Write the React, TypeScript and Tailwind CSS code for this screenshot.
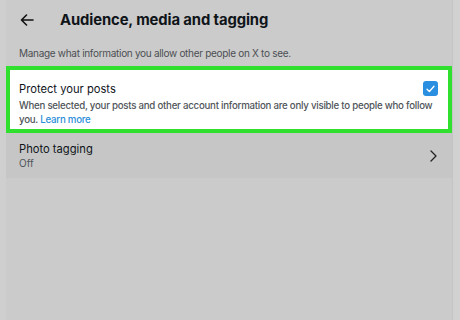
import React from "react";

export default function App() {
  return (
    <div
      className="w-[460px] h-[320px] bg-[#cfcfcf] flex overflow-hidden"
      style={{ fontFamily: "Inter, 'Noto Sans', sans-serif" }}
    >
      <div className="w-[6px] shrink-0 bg-[#cfcfcf]" />
      <div className="w-[446px] shrink-0 bg-[#cbcbcb] flex flex-col">
        <div className="h-[40px] flex items-center">
          <svg width="14" height="12" viewBox="0 0 14 12" className="ml-[14px]">
            <path d="M13 6H1.5M6.5 1L1.5 6L6.5 11" fill="none" stroke="#111" strokeWidth="1.6" strokeLinecap="round" strokeLinejoin="round" />
          </svg>
          <div className="ml-[26px] text-[14.8px] font-bold text-[#0f1419] tracking-[-0.1px]">
            Audience, media and tagging
          </div>
        </div>
        <div className="pl-[13px] mt-[6px] text-[10px] text-[#4b4f53] leading-[14px] tracking-[-0.3px]">
          Manage what information you allow other people on X to see.
        </div>
        <div className="mt-[6px] h-[67px] border-[4px] border-[#2fe02f] bg-white pl-[9px] pr-[4px] pt-[12px] relative">
          <div className="text-[11.2px] text-[#0f1419] leading-[15px]">Protect your posts</div>
          <div className="mt-[2px] text-[9.7px] font-medium text-[#50555a] leading-[13.5px] tracking-[-0.25px]">
            <div className="whitespace-nowrap">
              When selected, your posts and other account information are only visible to people who follow
            </div>
            <div>
              you. <span className="text-[#2b8fd8]">Learn more</span>
            </div>
          </div>
          <div className="absolute right-[10px] top-[11px] w-[15px] h-[15px] rounded-[3px] bg-[#2a8fe0] flex items-center justify-center">
            <svg width="9" height="8" viewBox="0 0 9 8">
              <path d="M1 4.2L3.4 6.5L8 1.2" fill="none" stroke="#fff" strokeWidth="1.3" strokeLinecap="round" strokeLinejoin="round" />
            </svg>
          </div>
        </div>
        <div className="h-[45px] bg-[#c6c6c6] flex items-center pl-[13px] pr-[15px]">
          <div className="flex-1 flex flex-col">
            <div className="text-[11.2px] text-[#0f1419] leading-[15px]">Photo tagging</div>
            <div className="text-[10px] text-[#50555a] leading-[13px]">Off</div>
          </div>
          <svg width="7" height="12" viewBox="0 0 7 12">
            <path d="M1 1L6 6L1 11" fill="none" stroke="#222" strokeWidth="1.3" strokeLinecap="round" strokeLinejoin="round" />
          </svg>
        </div>
        <div className="flex-1 bg-[#cbcbcb]" />
      </div>
      <div className="flex-1 bg-[#d1d1d1] border-l border-[#c4c4c4]" />
    </div>
  );
}
